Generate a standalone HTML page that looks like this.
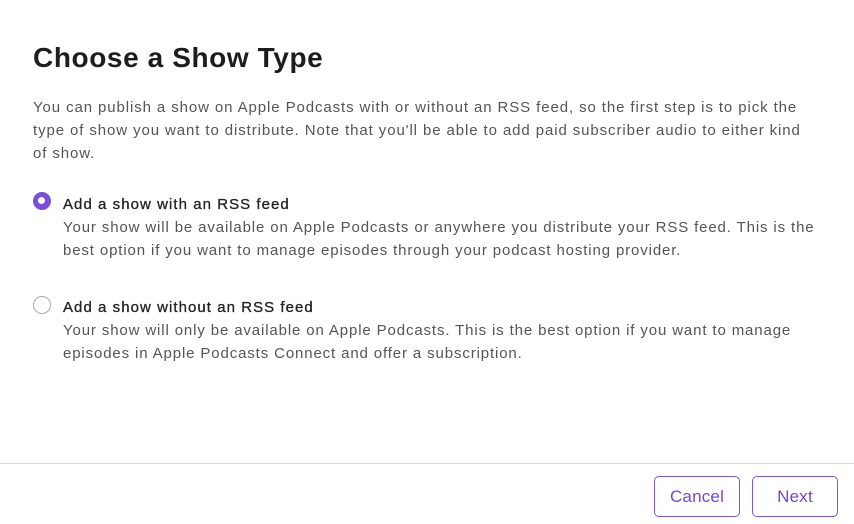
<!DOCTYPE html>
<html><head><style>
body{margin:0;width:854px;height:524px;background:#fff;font-family:"Liberation Sans",sans-serif;position:relative;overflow:hidden}
h1{position:absolute;left:33px;top:42px;margin:0;font-size:28px;font-weight:bold;color:#1d1d1f;letter-spacing:0.6px;white-space:nowrap}
.p{position:absolute;left:33px;top:96px;font-size:15px;line-height:23px;color:#555;white-space:nowrap;letter-spacing:0.9px}
.opt{position:absolute;left:63px;font-size:15px;line-height:23px;color:#555;white-space:nowrap;letter-spacing:0.87px}
.opt b{font-weight:normal;color:#222;display:block;-webkit-text-stroke:0.3px #222;letter-spacing:1.05px}
.r{position:absolute;left:33px;width:18px;height:18px;border-radius:50%;box-sizing:border-box}
.line{position:absolute;left:0;right:0;top:463px;height:1px;background:#d8d8d8}
.btn{position:absolute;top:476px;width:86px;height:41px;box-sizing:border-box;border:1px solid #7c55e0;border-radius:5px;color:#7346d8;font-size:17px;text-align:center;line-height:39px;letter-spacing:0.2px}
</style></head><body>
<h1>Choose a Show Type</h1>
<div class="p">You can publish a show on Apple Podcasts with or without an RSS feed, so the first step is to pick the<br>type of show you want to distribute. Note that you'll be able to add paid subscriber audio to either kind<br>of show.</div>
<div class="r" style="top:192px;background:#7a4fd9;border:5.5px solid #7a4fd9"><div style="width:7px;height:7px;background:#fff;border-radius:50%"></div></div>
<div class="opt" style="top:193px"><b>Add a show with an RSS feed</b>Your show will be available on Apple Podcasts or anywhere you distribute your RSS feed. This is the<br>best option if you want to manage episodes through your podcast hosting provider.</div>
<div class="r" style="top:296px;border:1px solid #aaa"></div>
<div class="opt" style="top:296px"><b>Add a show without an RSS feed</b>Your show will only be available on Apple Podcasts. This is the best option if you want to manage<br>episodes in Apple Podcasts Connect and offer a subscription.</div>
<div class="line"></div>
<div class="btn" style="left:654px">Cancel</div>
<div class="btn" style="left:752px">Next</div>
</body></html>
